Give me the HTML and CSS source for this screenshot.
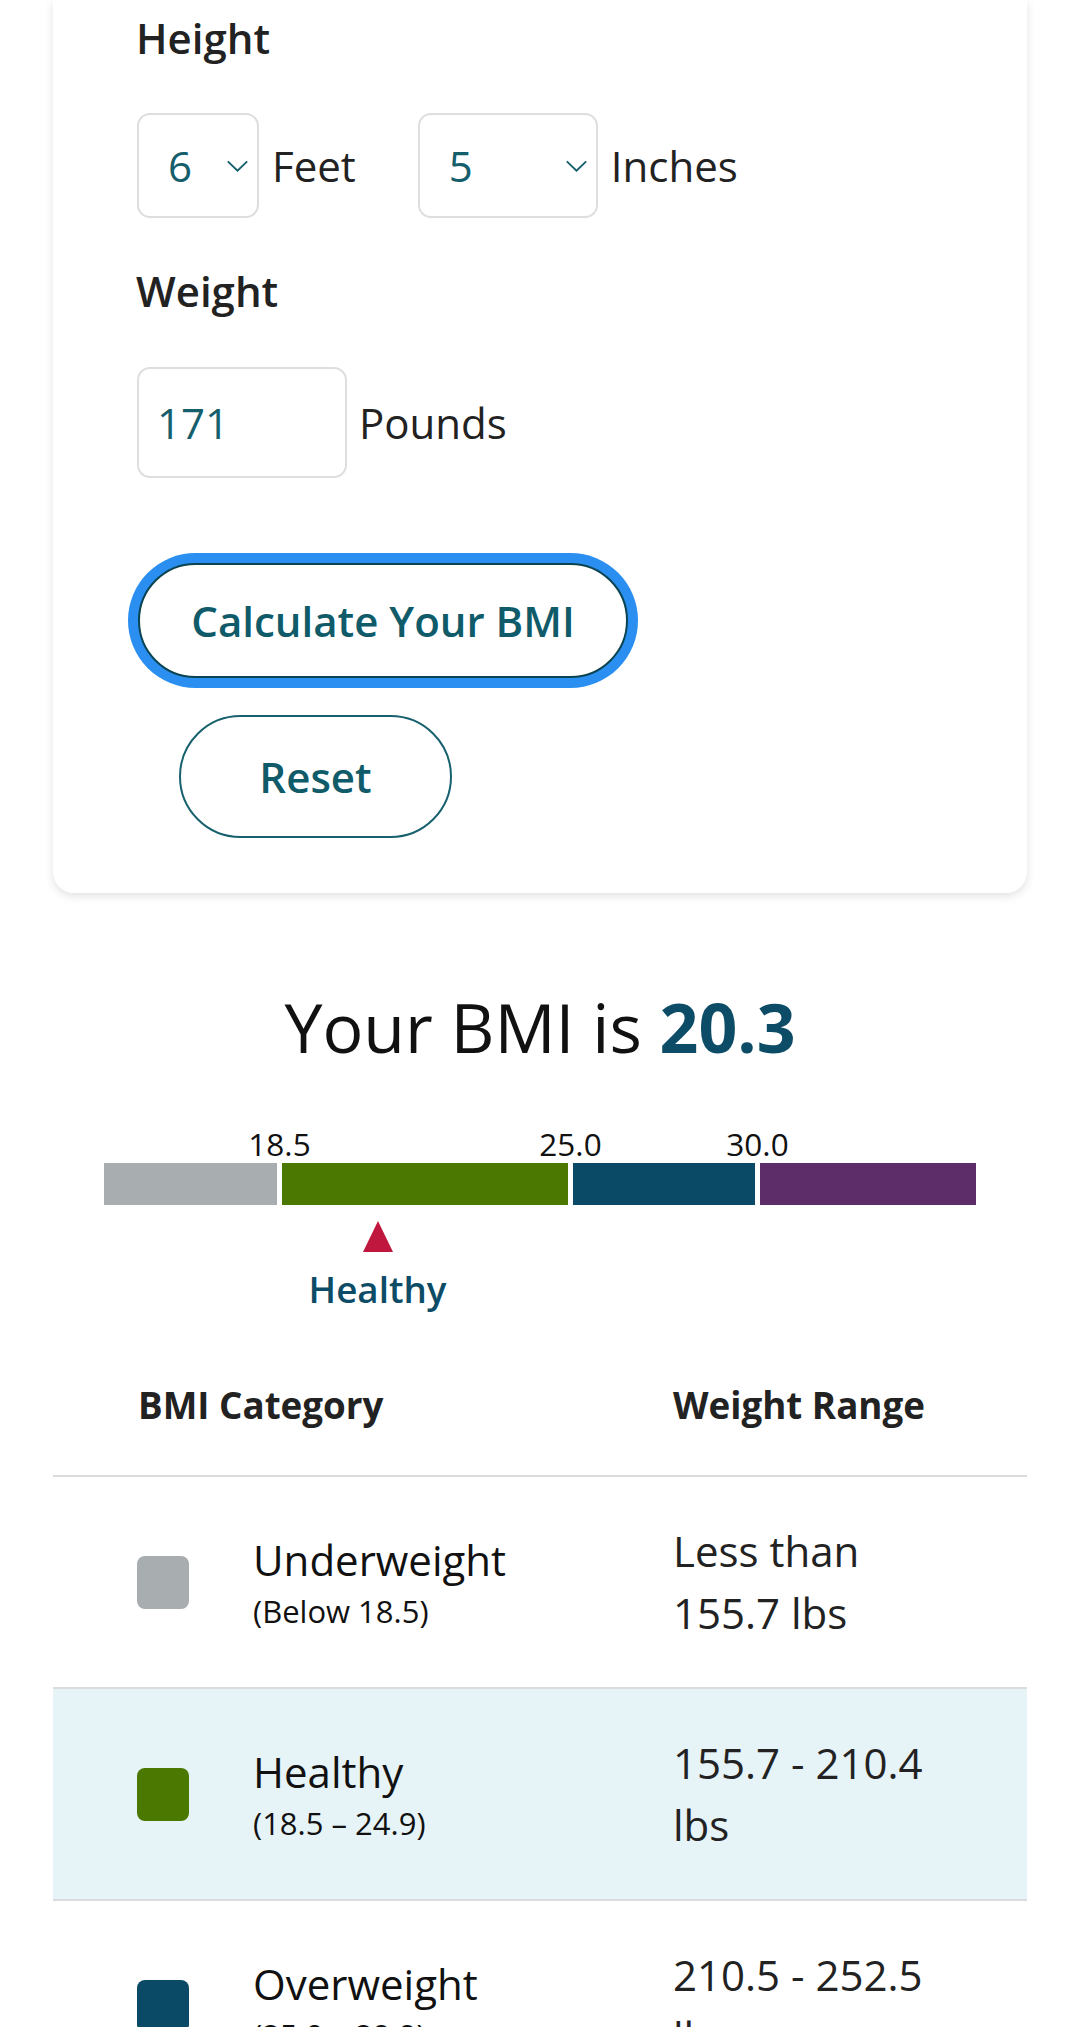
FILE: index.html
```html
<!DOCTYPE html>
<html lang="en">
<head>
    <meta charset="UTF-8">
    <title>BMI Calculator</title>
    <link rel="stylesheet" href="styles.css">
</head>
<body>
    <form class="calc-card">
        <div class="field">
            <label class="field-label">Height</label>
            <div class="field-row">
                <div class="unit-group">
                    <div class="select-wrap select-feet">
                        <select class="select">
                            <option>4</option>
                            <option>5</option>
                            <option selected>6</option>
                            <option>7</option>
                        </select>
                        <svg class="chevron" viewBox="0 0 24 13"><path d="M1.5 1.5L12 11.5L22.5 1.5"/></svg>
                    </div>
                    <span class="unit">Feet</span>
                </div>
                <div class="unit-group">
                    <div class="select-wrap select-inches">
                        <select class="select">
                            <option>0</option>
                            <option>1</option>
                            <option>2</option>
                            <option>3</option>
                            <option>4</option>
                            <option selected>5</option>
                            <option>6</option>
                            <option>7</option>
                            <option>8</option>
                            <option>9</option>
                            <option>10</option>
                            <option>11</option>
                        </select>
                        <svg class="chevron" viewBox="0 0 24 13"><path d="M1.5 1.5L12 11.5L22.5 1.5"/></svg>
                    </div>
                    <span class="unit">Inches</span>
                </div>
            </div>
        </div>

        <div class="field field-weight">
            <label class="field-label">Weight</label>
            <div class="field-row">
                <div class="unit-group">
                    <input type="text" class="text-input" value="171">
                    <span class="unit">Pounds</span>
                </div>
            </div>
        </div>

        <div class="actions">
            <button type="button" class="btn btn-primary">Calculate Your BMI</button>
            <button type="reset" class="btn btn-secondary">Reset</button>
        </div>
    </form>

    <section class="result">
        <h2 class="result-title">Your BMI is <strong class="result-value">20.3</strong></h2>

        <div class="scale">
            <div class="scale-bar">
                <div class="seg seg-under"><span class="tick">18.5</span></div>
                <div class="seg seg-healthy"><span class="tick">25.0</span></div>
                <div class="seg seg-over"><span class="tick">30.0</span></div>
                <div class="seg seg-obese"></div>
            </div>
            <div class="marker" style="margin-left: 273.5px">
                <span class="marker-arrow"></span>
                <span class="marker-label">Healthy</span>
            </div>
        </div>

        <div class="bmi-table">
            <div class="table-row table-head">
                <div class="head-cell">BMI Category</div>
                <div class="head-cell">Weight Range</div>
            </div>
            <div class="table-row">
                <div class="col-cat">
                    <span class="swatch swatch-under"></span>
                    <div class="cat-text">
                        <div class="cat-name">Underweight</div>
                        <div class="cat-sub">(Below 18.5)</div>
                    </div>
                </div>
                <div class="col-range">Less than 155.7 lbs</div>
            </div>
            <div class="table-row is-current">
                <div class="col-cat">
                    <span class="swatch swatch-healthy"></span>
                    <div class="cat-text">
                        <div class="cat-name">Healthy</div>
                        <div class="cat-sub">(18.5 – 24.9)</div>
                    </div>
                </div>
                <div class="col-range">155.7 - 210.4 lbs</div>
            </div>
            <div class="table-row">
                <div class="col-cat">
                    <span class="swatch swatch-over"></span>
                    <div class="cat-text">
                        <div class="cat-name">Overweight</div>
                        <div class="cat-sub">(25.0 – 29.9)</div>
                    </div>
                </div>
                <div class="col-range">210.5 - 252.5 lbs</div>
            </div>
            <div class="table-row">
                <div class="col-cat">
                    <span class="swatch swatch-obese"></span>
                    <div class="cat-text">
                        <div class="cat-name">Obese</div>
                        <div class="cat-sub">(30.0 and Above)</div>
                    </div>
                </div>
                <div class="col-range">252.6 lbs or more</div>
            </div>
        </div>
    </section>
</body>
</html>
```

FILE: styles.css
```css
body {
    margin: 0;
    background-color: #fff;
    font-family: 'Open Sans', 'Noto Sans', sans-serif;
    color: #222;
}
.calc-card {
    margin: 0 53px;
    padding: 8px 84px 55px;
    background-color: #fff;
    border-radius: 0 0 21px 21px;
    box-shadow: 0 3px 10px rgba(0,0,0,0.12);
}
.field-label {
    display: block;
    margin-left: -1px;
    font-size: 42px;
    line-height: 60px;
    font-weight: 600;
    color: #222;
}
.field-weight {
    margin-top: 43px;
}
.field-row {
    display: flex;
    align-items: center;
    gap: 62px;
    margin-top: 45px;
}
.field-weight .field-row {
    margin-top: 46px;
}
.unit-group {
    display: flex;
    align-items: center;
    gap: 13px;
}
.unit {
    font-size: 42px;
    color: #222;
}
.select-wrap {
    position: relative;
}
.select {
    -webkit-appearance: none;
    appearance: none;
    box-sizing: border-box;
    height: 105px;
    padding: 0 0 0 29px;
    border: 2px solid #dedede;
    border-radius: 13px;
    background-color: #fff;
    font-family: inherit;
    font-size: 42px;
    color: #155e6c;
}
.select-feet .select {
    width: 122px;
}
.select-inches .select {
    width: 180px;
}
.chevron {
    position: absolute;
    right: 10px;
    top: 47px;
    width: 23px;
    height: 12px;
    pointer-events: none;
    fill: none;
    stroke: #155e6c;
    stroke-width: 2;
}
.text-input {
    box-sizing: border-box;
    width: 210px;
    height: 111px;
    padding: 0 0 0 18px;
    border: 2px solid #dedede;
    border-radius: 13px;
    font-family: inherit;
    font-size: 42px;
    color: #155e6c;
}
.unit-group .text-input + .unit {
    margin-left: -1px;
}
.actions {
    display: flex;
    flex-direction: column;
    align-items: flex-start;
    gap: 37px;
    margin-top: 85px;
}
.btn {
    box-sizing: border-box;
    background-color: #fff;
    font-family: inherit;
    font-size: 42px;
    font-weight: 600;
    color: #0f5b69;
    cursor: pointer;
}
.btn-primary {
    height: 115px;
    width: 490px;
    margin-left: 1px;
    border: 2px solid #0a4450;
    border-radius: 58px;
    box-shadow: 0 0 0 10px #2b8ff2;
}
.btn-secondary {
    height: 123px;
    width: 273px;
    margin-left: 42px;
    border: 2px solid #17606d;
    border-radius: 62px;
}
.result {
    margin: 94px 53px 0;
}
.result-title {
    margin: 0;
    text-align: center;
    font-size: 68px;
    line-height: 80px;
    font-weight: 400;
    color: #111;
}
.result-value {
    font-weight: 700;
    color: #0d4c66;
}
.scale {
    width: 872px;
    margin: 57px auto 0;
    padding-top: 39px;
}
.scale-bar {
    display: flex;
    gap: 5px;
    height: 42px;
}
.seg {
    position: relative;
}
.seg-under {
    width: 173px;
    background-color: #a8adb0;
}
.seg-healthy {
    width: 286px;
    background-color: #4a7800;
}
.seg-over {
    width: 182px;
    background-color: #0b4a66;
}
.seg-obese {
    width: 216px;
    background-color: #5c2d69;
}
.tick {
    position: absolute;
    right: -2.5px;
    bottom: 100%;
    transform: translateX(50%);
    font-size: 31.5px;
    line-height: 39px;
    color: #111;
}
.marker {
    width: 0;
    margin-top: 16px;
    display: flex;
    flex-direction: column;
    align-items: center;
}
.marker-arrow {
    width: 0;
    height: 0;
    border-left: 15.5px solid transparent;
    border-right: 15.5px solid transparent;
    border-bottom: 31px solid #c0173f;
}
.marker-label {
    margin-top: 15px;
    font-size: 36.75px;
    line-height: 45px;
    font-weight: 600;
    color: #0d4c66;
    white-space: nowrap;
}
.bmi-table {
    margin-top: 69px;
}
.table-row {
    display: grid;
    grid-template-columns: 536px 270px;
    align-items: center;
    padding: 43px 0 43px 84px;
    border-bottom: 2px solid #dcdcdc;
}
.table-head {
    padding: 0 0 46px 85px;
}
.head-cell {
    font-size: 36.75px;
    line-height: 48px;
    font-weight: 700;
    color: #222;
    white-space: nowrap;
}
.head-cell + .head-cell {
    margin-left: -1px;
}
.is-current {
    background-color: #e6f3f7;
}
.col-cat {
    display: flex;
    align-items: center;
    gap: 64px;
}
.swatch {
    width: 52px;
    height: 53px;
    border-radius: 8px;
}
.swatch-under { background-color: #a8adb0; }
.swatch-healthy { background-color: #4a7800; }
.swatch-over { background-color: #0b4a66; }
.swatch-obese { background-color: #5c2d69; }
.cat-name {
    font-size: 42px;
    line-height: 50px;
    color: #111;
}
.cat-sub {
    margin-top: 8px;
    font-size: 31px;
    line-height: 36px;
    color: #111;
}
.col-range {
    font-size: 42px;
    line-height: 62px;
    color: #222;
}
```
